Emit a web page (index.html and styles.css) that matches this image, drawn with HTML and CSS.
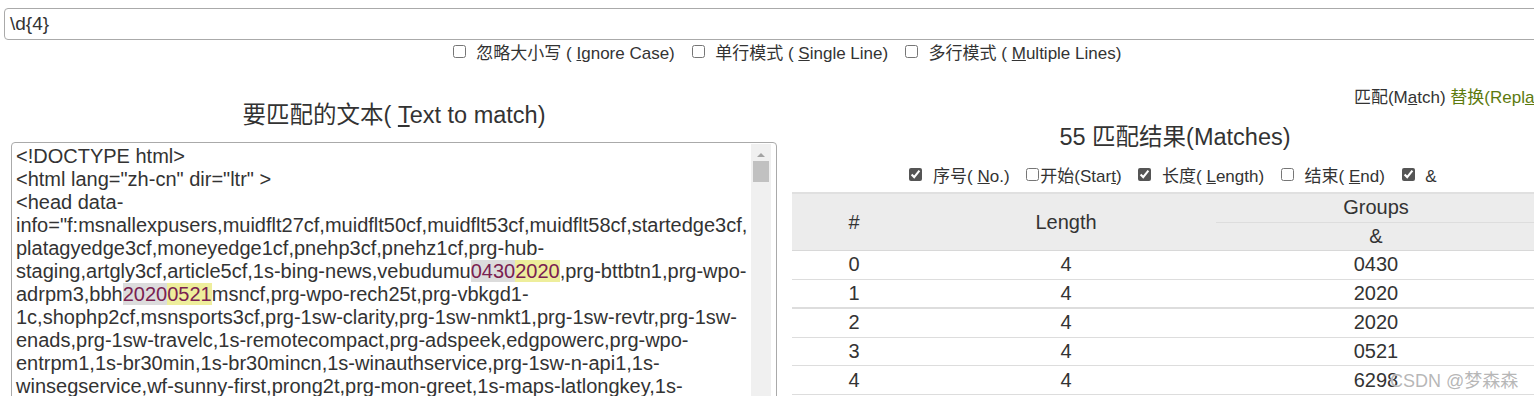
FILE: index.html
```html
<!DOCTYPE html>
<html lang="zh-cn">
<head>
    <meta charset="UTF-8">
    <title>正则表达式测试</title>
    <link rel="stylesheet" href="styles.css">
</head>
<body>
<div class="page">

    <!-- Pattern -->
    <div class="regex-input">\d{4}</div>

    <!-- Options -->
    <div class="options">
        <label><input type="checkbox"> 忽略大小写 ( <u>I</u>gnore Case)</label>
        <label><input type="checkbox"> 单行模式 ( <u>S</u>ingle Line)</label>
        <label><input type="checkbox"> 多行模式 ( <u>M</u>ultiple Lines)</label>
    </div>

    <div class="main">

        <!-- Left: source text -->
        <div class="col-left">
            <h2 class="title">要匹配的文本( <u>T</u>ext to match)</h2>
            <div class="editor">
                <div class="editor-text">
                    <div>&lt;!DOCTYPE html&gt;</div>
                    <div>&lt;html lang="zh-cn" dir="ltr" &gt;</div>
                    <div>&lt;head data-</div>
                    <div>info="f:msnallexpusers,muidflt27cf,muidflt50cf,muidflt53cf,muidflt58cf,startedge3cf,</div>
                    <div>platagyedge3cf,moneyedge1cf,pnehp3cf,pnehz1cf,prg-hub-</div>
                    <div>staging,artgly3cf,article5cf,1s-bing-news,vebudumu<span class="hl-a">0430</span><span class="hl-b">2020</span>,prg-bttbtn1,prg-wpo-</div>
                    <div>adrpm3,bbh<span class="hl-a">2020</span><span class="hl-b">0521</span>msncf,prg-wpo-rech25t,prg-vbkgd1-</div>
                    <div>1c,shophp2cf,msnsports3cf,prg-1sw-clarity,prg-1sw-nmkt1,prg-1sw-revtr,prg-1sw-</div>
                    <div>enads,prg-1sw-travelc,1s-remotecompact,prg-adspeek,edgpowerc,prg-wpo-</div>
                    <div>entrpm1,1s-br30min,1s-br30mincn,1s-winauthservice,prg-1sw-n-api1,1s-</div>
                    <div>winsegservice,wf-sunny-first,prong2t,prg-mon-greet,1s-maps-latlongkey,1s-</div>
                </div>
                <div class="scrollbar">
                    <div class="scroll-up"></div>
                    <div class="scroll-thumb"></div>
                </div>
            </div>
        </div>

        <!-- Right: results -->
        <div class="col-right">
            <div class="tabs">
                <span class="tab">匹配(M<u>a</u>tch)</span>
                <span class="tab tab-replace">替换(Repl<u>a</u>ce)</span>
            </div>
            <h2 class="title result-title">55 匹配结果(Matches)</h2>
            <div class="columns">
                <label><input type="checkbox" checked> 序号( <u>N</u>o.)</label>
                <label class="tight"><input type="checkbox">开始(Star<u>t</u>)</label>
                <label><input type="checkbox" checked> 长度( <u>L</u>ength)</label>
                <label><input type="checkbox"> 结束( <u>E</u>nd)</label>
                <label><input type="checkbox" checked> &amp;</label>
            </div>
            <table class="results">
                <thead>
                    <tr>
                        <th rowspan="2" class="c-no">#</th>
                        <th rowspan="2" class="c-len">Length</th>
                        <th class="c-grp">Groups</th>
                    </tr>
                    <tr>
                        <th class="c-grp sub">&amp;</th>
                    </tr>
                </thead>
                <tbody>
                    <tr><td>0</td><td>4</td><td>0430</td></tr>
                    <tr><td>1</td><td>4</td><td>2020</td></tr>
                    <tr class="thick"><td>2</td><td>4</td><td>2020</td></tr>
                    <tr><td>3</td><td>4</td><td>0521</td></tr>
                    <tr><td>4</td><td>4</td><td>6298</td></tr>
                </tbody>
            </table>
        </div>
    </div>

    <div class="watermark">CSDN @梦森森</div>
</div>
</body>
</html>
```

FILE: styles.css
```css
body {
    margin: 0;
    padding: 0;
    background-color: #fff;
    font-family: "Liberation Sans", Arial, "Noto Sans CJK SC", sans-serif;
    color: #333;
    overflow: hidden;
}

.page {
    position: relative;
    width: 1574px;
    height: 396px;
}

u {
    text-decoration: underline;
}

.regex-input {
    margin: 8px 4px 0;
    height: 30px;
    line-height: 30px;
    border: 1px solid #aaa;
    border-radius: 4px;
    padding-left: 5px;
    font-size: 19px;
}

.options {
    text-align: center;
    margin-top: 3px;
    height: 22px;
    line-height: 22px;
    font-size: 17px;
}

.options label {
    margin: 0 6px;
}

input[type="checkbox"] {
    width: 13px;
    height: 13px;
    margin: 0 6px 0 0;
    vertical-align: 1px;
    accent-color: #555;
}

.main {
    display: grid;
    grid-template-columns: 766px 766px;
    column-gap: 15px;
    margin: 22px 0 0 11px;
}

.title {
    margin: 0;
    font-size: 23.5px;
    font-weight: normal;
    line-height: 28px;
    text-align: center;
}

.col-left .title {
    margin-top: 14px;
}

.editor {
    display: flex;
    margin-top: 13px;
    height: 270px;
    border: 1px solid #aaa;
    border-radius: 4px;
    overflow: hidden;
}

.editor-text {
    flex: 1;
    padding: 2px 0 0 4px;
    font-size: 20px;
    line-height: 23px;
    white-space: nowrap;
    overflow: hidden;
}

.hl-a {
    background-color: #dcdcdc;
    color: #7a2150;
}

.hl-b {
    background-color: #eeee9c;
    color: #7a2150;
}

.scrollbar {
    width: 20px;
    margin: 1px 5px 0 0;
    background-color: #f0f0f0;
}

.scroll-up {
    width: 0;
    height: 0;
    margin: 9px auto 4px;
    border-left: 4px solid transparent;
    border-right: 4px solid transparent;
    border-bottom: 4px solid #a3a3a3;
}

.scroll-thumb {
    height: 21px;
    margin: 0 2px;
    background-color: #c1c1c1;
}

.tabs {
    text-align: right;
    font-size: 17px;
    line-height: 20px;
    margin-top: 1px;
}

.tab-replace {
    color: #5d7a0e;
}

.result-title {
    margin-top: 15px;
}

.columns {
    text-align: center;
    margin-top: 16px;
    font-size: 17px;
    line-height: 20px;
    padding-right: 4px;
}

.columns label {
    margin: 0 6px;
}

.columns label.tight input {
    margin-right: 1px;
}

.results {
    margin-top: 5px;
    width: 744px;
    border-collapse: collapse;
    font-size: 20px;
    text-align: center;
}

.results thead {
    background-color: #ececec;
    border-top: 2px solid #e0e0e0;
}

.results th {
    font-weight: normal;
    height: 27.5px;
    padding: 0;
}

.results .c-no,
.results .c-len,
.results .c-grp.sub {
    border-bottom: 1px solid #d8d8d8;
}

.results .c-no {
    width: 124px;
}

.results .c-len {
    width: 300px;
}

.results .c-grp {
    width: 320px;
    border-bottom: 1px solid #ddd;
}

.results td {
    height: 27.6px;
    padding: 0;
    border-bottom: 1px solid #ddd;
}

.results tr.thick td {
    border-top: 2px solid #ddd;
}

.watermark {
    position: absolute;
    left: 1390px;
    top: 358px;
    font-size: 18px;
    color: rgba(170, 170, 170, 0.85);
    text-shadow: 0 0 1px #fff;
}
```
